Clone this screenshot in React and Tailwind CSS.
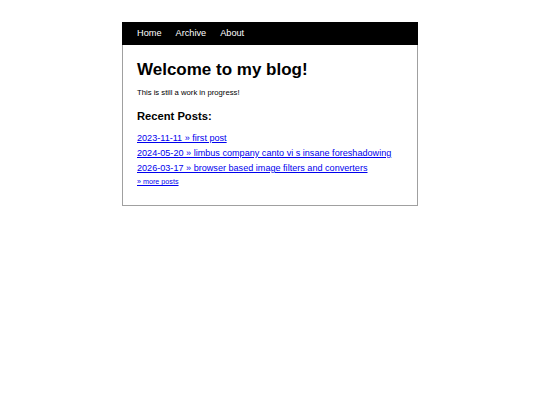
export default function App() {
  const posts = [
    "2023-11-11 » first post",
    "2024-05-20 » limbus company canto vi s insane foreshadowing",
    "2026-03-17 » browser based image filters and converters",
  ];
  return (
    <div className="w-[540px] h-[405px] bg-white font-['Liberation_Sans',Arial,sans-serif] text-black">
      <div className="w-[296px] mx-auto pt-[22px]">
        <nav className="h-[23px] bg-black flex items-center gap-[14px] px-[15px] text-white text-[9.2px] leading-none">
          <a>Home</a>
          <a>Archive</a>
          <a>About</a>
        </nav>
        <div className="border-x border-b border-[#a0a0a0] px-[14px] pt-[15px] pb-[19px]">
          <h1 className="text-[17px] leading-[20px] font-bold">Welcome to my blog!</h1>
          <p className="mt-[8px] text-[7.7px] leading-[9px]">This is still a work in progress!</p>
          <h2 className="mt-[12.6px] text-[11.2px] leading-[13px] font-bold">Recent Posts:</h2>
          <ul className="mt-[8.3px]">
            {posts.map((p) => (
              <li key={p} className="text-[9.1px] leading-[15px]">
                <a href="#" className="text-[#0000ee] underline">{p}</a>
              </li>
            ))}
          </ul>
          <a href="#" className="block mt-[1.6px] text-[7.2px] leading-[9px] text-[#0000ee] underline">» more posts</a>
        </div>
      </div>
    </div>
  );
}
